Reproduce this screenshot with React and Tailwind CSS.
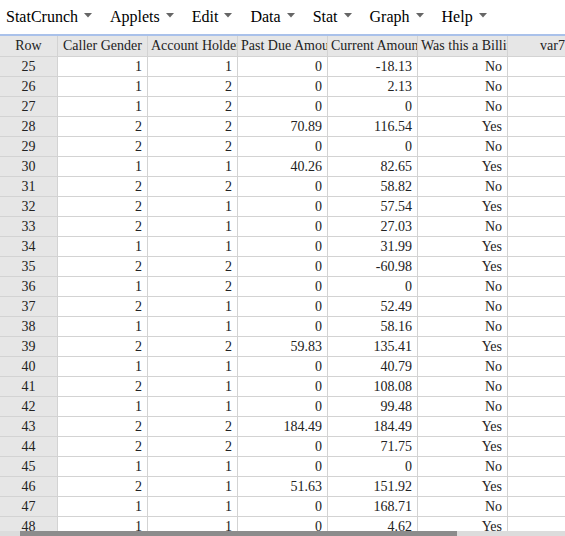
import React from 'react'

const menus = ['StatCrunch', 'Applets', 'Edit', 'Data', 'Stat', 'Graph', 'Help']

const columns = ['Caller Gender', 'Account Holder', 'Past Due Amount', 'Current Amount', 'Was this a Billing', 'var7']

const rows = [
  [25, 1, 1, 0, '-18.13', 'No'],
  [26, 1, 2, 0, '2.13', 'No'],
  [27, 1, 2, 0, '0', 'No'],
  [28, 2, 2, '70.89', '116.54', 'Yes'],
  [29, 2, 2, 0, '0', 'No'],
  [30, 1, 1, '40.26', '82.65', 'Yes'],
  [31, 2, 2, 0, '58.82', 'No'],
  [32, 2, 1, 0, '57.54', 'Yes'],
  [33, 2, 1, 0, '27.03', 'No'],
  [34, 1, 1, 0, '31.99', 'Yes'],
  [35, 2, 2, 0, '-60.98', 'Yes'],
  [36, 1, 2, 0, '0', 'No'],
  [37, 2, 1, 0, '52.49', 'No'],
  [38, 1, 1, 0, '58.16', 'No'],
  [39, 2, 2, '59.83', '135.41', 'Yes'],
  [40, 1, 1, 0, '40.79', 'No'],
  [41, 2, 1, 0, '108.08', 'No'],
  [42, 1, 1, 0, '99.48', 'No'],
  [43, 2, 2, '184.49', '184.49', 'Yes'],
  [44, 2, 2, 0, '71.75', 'Yes'],
  [45, 1, 1, 0, '0', 'No'],
  [46, 2, 1, '51.63', '151.92', 'Yes'],
  [47, 1, 1, 0, '168.71', 'No'],
  [48, 1, 1, 0, '4.62', 'Yes'],
]

function Caret() {
  return (
    <svg width="8" height="5" viewBox="0 0 8 5" className="ml-[6px] mb-[3px]">
      <path d="M0 0 L8 0 L4 4.5 Z" fill="#666" />
    </svg>
  )
}

function App() {
  return (
    <div className="w-[565px] h-[536px] overflow-hidden bg-white text-[#222]" style={{ fontFamily: '"Liberation Serif", "Times New Roman", serif' }}>
      {/* menu bar */}
      <div className="h-[34px] flex items-center pl-[6px] gap-[18px] text-[16px] text-black">
        {menus.map((m) => (
          <div key={m} className="flex items-center">
            <span>{m}</span>
            <Caret />
          </div>
        ))}
      </div>

      {/* grid */}
      <div className="h-[497px] overflow-hidden border-t-2 border-[#a9c1ea] text-[14px]">
        <div className="flex h-[21px] bg-[#e6e6e6] border-b border-[#d3d3d3]">
          <div className="w-[58px] shrink-0 border-r border-[#d3d3d3] text-center leading-[20px]">Row</div>
          {columns.map((c) => (
            <div key={c} className="w-[90px] shrink-0 px-[3px] border-r border-[#d3d3d3] text-center leading-[20px] whitespace-nowrap overflow-hidden">
              {c}
            </div>
          ))}
        </div>
        {rows.map((r) => (
          <div key={r[0]} className="flex h-[20px] border-b border-[#d3d3d3]">
            <div className="w-[58px] shrink-0 bg-[#e6e6e6] border-r border-[#d3d3d3] text-center leading-[19px]">{r[0]}</div>
            {r.slice(1).map((v, i) => (
              <div key={i} className="w-[90px] shrink-0 border-r border-[#d3d3d3] text-right pr-[5px] leading-[19px] whitespace-nowrap">
                {v}
              </div>
            ))}
            <div className="w-[90px] shrink-0 border-r border-[#d3d3d3]" />
          </div>
        ))}
      </div>

      {/* horizontal scrollbar */}
      <div className="flex h-[5px] bg-[#dcdcdc]">
        <div className="w-[20px]" />
        <div className="w-[437px] bg-[#8c8c8c]" />
      </div>
    </div>
  )
}

export default App
